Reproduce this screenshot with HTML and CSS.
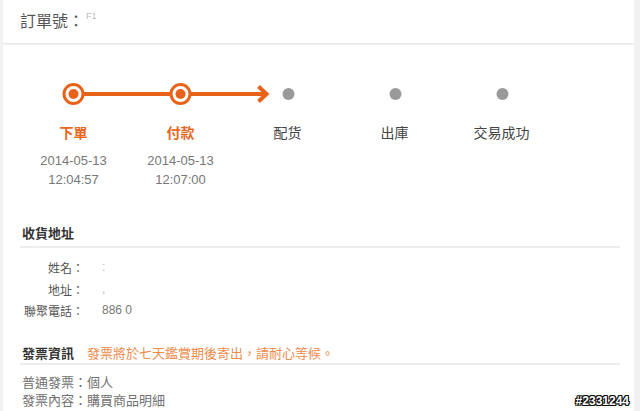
FILE: index.html
```html
<!DOCTYPE html>
<html lang="zh-Hant">
<head>
<meta charset="utf-8">
<title>訂單</title>
<link rel="stylesheet" href="styles.css">
</head>
<body>
<div class="page">
  <header class="order-head">
    <span class="order-label">訂單號：</span><span class="order-no">F1</span>
  </header>
  <main class="panel">
    <div class="steps">
      <svg class="track" width="535" height="24" viewBox="0 0 535 24">
        <line x1="64" y1="12" x2="150" y2="12" stroke="#e8621a" stroke-width="4"/>
        <line x1="171" y1="12" x2="245" y2="12" stroke="#e8621a" stroke-width="4"/>
        <polyline points="238.5,4.5 246.5,12 238.5,19.5" fill="none" stroke="#e8621a" stroke-width="4" stroke-linejoin="miter"/>
        <circle cx="53.5" cy="12" r="9.5" fill="#fff" stroke="#e8621a" stroke-width="3"/>
        <circle cx="53.5" cy="12" r="5" fill="#e8621a"/>
        <circle cx="160.5" cy="12" r="9.5" fill="#fff" stroke="#e8621a" stroke-width="3"/>
        <circle cx="160.5" cy="12" r="5" fill="#e8621a"/>
        <circle cx="268.5" cy="12" r="6" fill="#9a9a9a"/>
        <circle cx="375.5" cy="12" r="6" fill="#9a9a9a"/>
        <circle cx="482.5" cy="12" r="6" fill="#9a9a9a"/>
      </svg>
      <div class="step-labels">
        <div class="step done"><div class="step-name">下單</div><div class="step-time">2014-05-13<br>12:04:57</div></div>
        <div class="step done"><div class="step-name">付款</div><div class="step-time">2014-05-13<br>12:07:00</div></div>
        <div class="step"><div class="step-name">配货</div></div>
        <div class="step"><div class="step-name">出庫</div></div>
        <div class="step"><div class="step-name">交易成功</div></div>
      </div>
    </div>

    <section class="section addr">
      <h2 class="sec-title">收貨地址</h2>
      <div class="addr-rows">
        <div class="addr-row"><span class="addr-key">姓名：</span><span class="addr-val dim">:</span></div>
        <div class="addr-row"><span class="addr-key">地址：</span><span class="addr-val dim">,</span></div>
        <div class="addr-row"><span class="addr-key">聯聚電話：</span><span class="addr-val">886 0</span></div>
      </div>
    </section>

    <section class="section invoice">
      <h2 class="sec-title">發票資訊<span class="notice">發票將於七天鑑賞期後寄出，請耐心等候。</span></h2>
      <div class="inv-rows">
        <div class="inv-row">普通發票：個人</div>
        <div class="inv-row">發票內容：購買商品明細</div>
      </div>
    </section>
  </main>
  <div class="watermark">#2331244</div>
</div>
</body>
</html>
```
FILE: styles.css
```css
html, body {
  margin: 0;
  padding: 0;
}
body {
  background: #f1f1f1;
  font-family: "Liberation Sans", "Noto Sans CJK TC", sans-serif;
  color: #666;
  width: 640px;
  height: 411px;
  overflow: hidden;
}
.page {
  position: relative;
  margin: 0 6px 0 3px;
  height: 411px;
  background: #fff;
}
.order-head {
  height: 44px;
  box-sizing: border-box;
  padding-left: 17px;
  padding-bottom: 4px;
  display: flex;
  align-items: center;
  border-bottom: 1px solid #e8e8e8;
}
.order-label {
  font-family: "Noto Sans CJK TC", sans-serif;
  font-size: 16px;
  color: #555;
}
.order-no {
  font-size: 9px;
  color: #bbb;
  margin-left: 2px;
  margin-top: -8px;
}
.panel {
  padding: 37px 14px 0 17px;
  border-top: 1px solid #f3f3f3;
}
.track {
  display: block;
}
.step-labels {
  display: grid;
  grid-template-columns: repeat(5, 107px);
  margin-top: 16px;
}
.step {
  text-align: center;
}
.step-name {
  font-family: "Noto Sans CJK TC", serif;
  font-size: 14px;
  line-height: 20px;
  color: #444;
}
.step.done .step-name {
  color: #e8681f;
  font-weight: bold;
}
.step-time {
  margin-top: 9px;
  font-size: 13px;
  line-height: 19px;
  color: #777;
}
.addr {
  margin-top: 34px;
}
.sec-title {
  margin: 0;
  font-family: "Noto Sans CJK TC", sans-serif;
  font-size: 13px;
  font-weight: bold;
  line-height: 20px;
  color: #333;
  padding-bottom: 3px;
  border-bottom: 2px solid #ededed;
  padding-left: 2px;
}
.addr-rows {
  padding-top: 9px;
}
.addr-row {
  display: flex;
  font-size: 12px;
  line-height: 21.5px;
  font-family: "Noto Sans CJK TC", sans-serif;
}
.addr-key {
  width: 64px;
  text-align: right;
  color: #555;
}
.addr-val {
  margin-left: 18px;
  font-family: "Liberation Sans", sans-serif;
  color: #777;
}
.addr-val.dim {
  color: #bbb;
}
.invoice {
  margin-top: 21px;
}
.invoice .sec-title {
  padding-bottom: 0;
}
.notice {
  font-weight: normal;
  color: #ee8a4a;
  margin-left: 13px;
}
.inv-rows {
  padding-top: 8px;
  padding-left: 2px;
}
.inv-row {
  font-family: "Noto Sans CJK TC", sans-serif;
  font-size: 13px;
  line-height: 18px;
  color: #707070;
}
.watermark {
  position: absolute;
  right: 5px;
  bottom: 3px;
  font-family: "Liberation Sans", sans-serif;
  font-size: 12px;
  font-weight: bold;
  color: #fff;
  text-shadow: -1px 0 #111, 1px 0 #111, 0 -1px #111, 0 1px #111, 1px 1px #111, -1px -1px #111, 1px -1px #111, -1px 1px #111;
}
```
